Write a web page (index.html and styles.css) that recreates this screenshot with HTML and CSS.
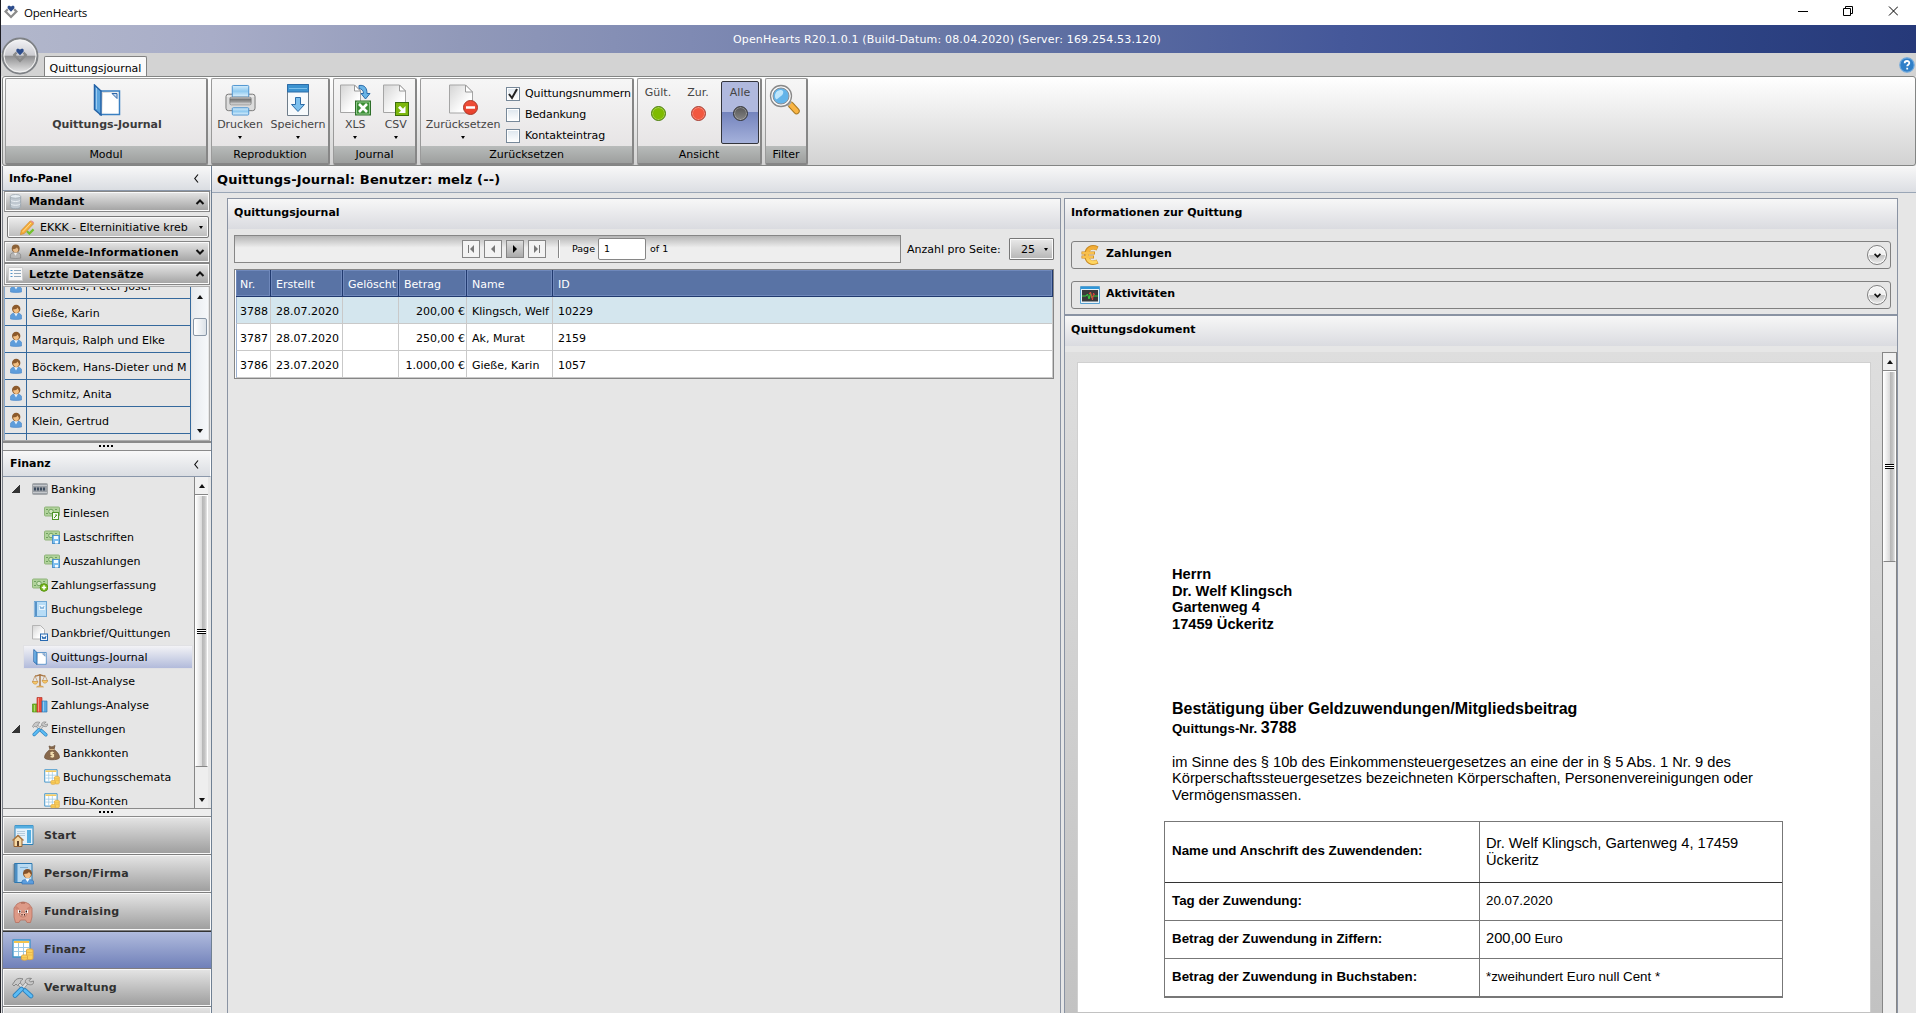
FILE: index.html
```html
<!DOCTYPE html>
<html lang="de">
<head>
<meta charset="utf-8">
<title>OpenHearts</title>
<link rel="stylesheet" href="styles.css">
</head>
<body>
<svg class="defs" width="0" height="0">
  <defs>
    <linearGradient id="gBlue" x1="0" y1="0" x2="0" y2="1"><stop offset="0" stop-color="#d6edfb"/><stop offset=".5" stop-color="#8fcaf0"/><stop offset="1" stop-color="#e2f3fd"/></linearGradient>
    <linearGradient id="gPage" x1="0" y1="0" x2="1" y2="1"><stop offset="0" stop-color="#d4d4d4"/><stop offset=".7" stop-color="#fff"/></linearGradient>
    <linearGradient id="gRed" x1="0" y1="0" x2="0" y2="1"><stop offset="0" stop-color="#f0503a"/><stop offset="1" stop-color="#e8402c"/></linearGradient>
    <linearGradient id="gGold" x1="0" y1="0" x2="0" y2="1"><stop offset="0" stop-color="#f2ac35"/><stop offset="1" stop-color="#ffd661"/></linearGradient>
    <linearGradient id="gRoll" x1="0" y1="0" x2="0" y2="1"><stop offset="0" stop-color="#ddd"/><stop offset=".3" stop-color="#777"/><stop offset=".6" stop-color="#999"/><stop offset="1" stop-color="#eee"/></linearGradient>
    <linearGradient id="gOrb" x1="0" y1="0" x2="0" y2="1"><stop offset="0" stop-color="#f5f5f8"/><stop offset=".48" stop-color="#cdcdd2"/><stop offset=".5" stop-color="#8e8e90"/><stop offset="1" stop-color="#ededed"/></linearGradient>
    <symbol id="logo" viewBox="0 0 14 14"><path fill="#8b8b8b" d="M3 3.500 0 6.500l7 7 7-7-3-3-1.600 1.600 1.500 1.500L7 10.400 3.100 6.500l1.500-1.500z"/><path fill="#2c4c8c" d="M7 6.800 3.600 3.300V1.500L5 .5l2 1 2-1 1.400 1v1.800z"/></symbol>
    <symbol id="journal" viewBox="0 0 28 32"><path fill="url(#gPage)" stroke="#3a80c2" stroke-width="1.500" d="M7 7h19.500v23.500H7z"/><path fill="#fff" d="M10 9h14.500v19.500H10z"/><path fill="#c9dcf0" stroke="#2e66a8" d="m19 9.500 5 5v-5z"/><path fill="#5ba4dd" stroke="#2462a6" stroke-width="1.500" d="m1.500 1 6.500 6v24l-6.500-5.500z"/><path stroke="#9dcbf0" d="M3.500 4v21"/></symbol>
    <symbol id="printer" viewBox="0 0 32 32"><rect x="1" y="10" width="30" height="17" rx="2.500" fill="#dcdcdc" stroke="#777"/><path stroke="#f6f6f6" d="M2 12h28"/><rect x="7.500" y="1" width="17" height="12" rx="1" fill="url(#gBlue)" stroke="#4b93cf"/><rect x="5" y="13" width="22" height="8" rx="1.500" fill="url(#gRoll)" stroke="#666" stroke-width=".6"/><rect x="7.500" y="24" width="17" height="7.500" rx="1" fill="url(#gBlue)" stroke="#4b93cf"/></symbol>
    <symbol id="save" viewBox="0 0 22 32"><path fill="#f7fafc" stroke="#6f7d8a" d="M.5.500h21v31H.5z"/><path fill="#3d93d0" stroke="#2c6ca8" d="M.5.500h21v7.500H.5z"/><path stroke="#7cc0ec" d="M2 4.500h18"/><path fill="#7cc0ee" stroke="#2d6da8" d="M8.500 13.500h5v7h4L11 27.500l-6.500-7h4z"/></symbol>
    <symbol id="xls" viewBox="0 0 31 32"><path fill="url(#gPage)" stroke="#a5a5a5" d="M.5 1h14l6 6v21.500H.5z"/><path fill="#fff" stroke="#999" d="M14.500 1v6h6z"/><path fill="#69b4e6" stroke="#2c6ba8" d="M19 1.500c6-1 8 3 8 8H30l-4.500 5.500L21 9.500h2.500c0-3-1.500-4.500-4.500-5z"/><rect x="15.500" y="17" width="15" height="14" fill="#3b8e35" stroke="#2e6e2a"/><path fill="none" stroke="#8fc78b" d="M16.500 18h13v12h-13z"/><path stroke="#fff" stroke-width="2.600" d="m19 20 8 8m0-8-8 8"/></symbol>
    <symbol id="csv" viewBox="0 0 26 32"><path fill="url(#gPage)" stroke="#a5a5a5" d="M.5 1h16l6 6v21.500H.5z"/><path fill="#fff" stroke="#999" d="M16.500 1v6h6z"/><rect x="12.500" y="18.500" width="13" height="13" fill="#7db70e" stroke="#3c6e0c"/><path fill="#fff" d="M22.500 22v7h-7l2.500-2.300-3-3 2-2 3 3z"/></symbol>
    <symbol id="reset" viewBox="0 0 29 32"><path fill="url(#gPage)" stroke="#a5a5a5" d="M.5 1h16l7 7v21H.5z"/><path fill="#fff" stroke="#999" d="M16.500 1v7h7z"/><circle cx="21.500" cy="23.500" r="7" fill="url(#gRed)" stroke="#a83828"/><path stroke="#fff" stroke-width="2.500" d="M17 23.500h9"/></symbol>
    <symbol id="lens" viewBox="0 0 32 32"><path stroke="#a87922" stroke-width="6.500" stroke-linecap="round" d="m22 21 5.500 6"/><path stroke="#f9b443" stroke-width="4.500" stroke-linecap="round" d="m22 21 5.500 6"/><path stroke="#aaa" stroke-width="5" d="m18 17.500 3 3"/><circle cx="12" cy="12" r="10.500" fill="#f8f8f8" stroke="#888" stroke-width="1.300"/><circle cx="12" cy="12" r="8" fill="#63b4e9" stroke="#8a8f95"/><path fill="#bfe6fb" d="M6 12c0-4 3-6 6-6s3 4 0 6-4 4-5 3-1-2-1-3z"/></symbol>
    <symbol id="db" viewBox="0 0 12 16"><path fill="#bfc8d0" stroke="#9aa5ae" d="M.5 2.500v11c0 3 11 3 11 0v-11"/><ellipse cx="6" cy="2.500" rx="5.500" ry="2" fill="#e7eef3" stroke="#a5b0b8"/><path fill="none" stroke="#eef3f6" d="M1 6.500c1 2 9 2 10 0M1 10.500c1 2 9 2 10 0"/></symbol>
    <symbol id="pencil" viewBox="0 0 16 16"><path fill="#f6ad3a" stroke="#d08a28" stroke-width=".8" d="M11.500 1 15 4 5 14.500l-4 1L2 11z"/><path fill="#e48d8b" d="m11.500 1 1.500-.6 2.500 2-.5 1.600z"/><path stroke="#ffe3a0" d="m3.500 12.500 9-9.500"/><path fill="none" stroke="#72c02c" stroke-width="2.300" d="m8 12 2.500 2.500 4.500-4.500"/></symbol>
    <symbol id="user" viewBox="0 0 12 16"><path fill="#5e9ddb" stroke="#4a87c8" stroke-width=".6" d="M.5 15v-3.500C1.500 9.500 3 9 6 9s4.500.5 5.500 2.500V15q-5.500 1-11 0z"/><path fill="#e8f2fb" d="m4 9 2 3.500L8 9z"/><circle cx="6.200" cy="5" r="4.200" fill="#8c5a2c"/><path fill="#f3bf82" d="M3 5.500c3 0 4-1 4.500-2L9 6c-.5 4-5 4-6-.5z"/></symbol>
    <symbol id="userg" viewBox="0 0 12 16"><path fill="#b5b5b5" stroke="#777" stroke-width=".6" d="M.5 15v-3.500C1.500 9.500 3 9 6 9s4.500.5 5.500 2.500V15q-5.500 1-11 0z"/><path fill="#eee" d="m4 9 2 3.500L8 9z"/><circle cx="6.200" cy="4.800" r="4.200" fill="#8c6238"/><path fill="#e8bb88" d="M3 5.500c3 0 4-1 4.500-2L9 6c-.5 4-5 4-6-.5z"/></symbol>
    <symbol id="list" viewBox="0 0 15 14"><path fill="#f8f8f8" stroke="#ccc" d="M.5.500h14v13H.5z"/><path stroke="#8fa8bc" d="M6 3.500h7M6 6.500h7M6 9.500h7"/><path stroke="#4f94cc" d="M2.500 3.500h2M2.500 6.500h2M2.500 9.500h2"/></symbol>
    <symbol id="bank" viewBox="0 0 16 12"><rect x=".5" y=".5" width="15" height="11" rx="1" fill="#9a9fa5" stroke="#a5a8ab"/><path stroke="#c5c8cc" d="M1 2.500h14M1 9.500h14"/><path stroke="#3c4b5e" stroke-width="3" stroke-dasharray="2 1" d="M2 6h12"/></symbol>
    <symbol id="money" viewBox="0 0 16 14"><rect x=".5" y="1" width="15" height="9" rx="1" fill="#b1d39b" stroke="#8fb47a"/><circle cx="7" cy="5.500" r="2.300" fill="#cfe6bd" stroke="#6fa05f"/><path stroke="#6fa05f" d="M2 3.500h2m-2 4h2m7-4h2"/></symbol>
    <symbol id="mexcel" viewBox="0 0 16 14"><use href="#money"/><rect x="8.500" y="6.500" width="6" height="7" fill="#f4faef" stroke="#4e9427"/><path fill="none" stroke="#4e9427" d="m10 12 3-3h-2"/></symbol>
    <symbol id="mdisk" viewBox="0 0 16 14"><use href="#money"/><rect x="8.500" y="5.500" width="7" height="8" fill="#7fc0ef" stroke="#4d92ca"/><path fill="#f4faff" d="M10 6h4v3h-4zm1 5h3v2.500h-3z"/></symbol>
    <symbol id="mplus" viewBox="0 0 16 14"><use href="#money"/><circle cx="12" cy="9.500" r="3.800" fill="#78b71c" stroke="#589512"/><path stroke="#fff" stroke-width="1.500" d="M9.800 9.500h4.400M12 7.300v4.400"/></symbol>
    <symbol id="book" viewBox="0 0 16 16"><rect x="2.500" y=".5" width="12" height="15" fill="#b7dcf6" stroke="#6ea6d3"/><path fill="#5793c8" d="M2 1h3v14H2z"/><path stroke="#c8dcec" stroke-dasharray="1 1" stroke-width="2" d="M2 1.500v13"/><path fill="#e8f4fd" d="M7 4h6v5H7z"/><path fill="none" stroke="#81b2db" d="m8 5 1 3 1-2 1 2 1-3"/></symbol>
    <symbol id="docw" viewBox="0 0 16 16"><path fill="url(#gPage)" stroke="#b5b5b5" d="M.5.500h8l4 4V14H.5z"/><rect x="8.500" y="9" width="7" height="6.500" fill="#eef4fb" stroke="#2668b0"/><path fill="none" stroke="#2668b0" d="m10 11 1 3 1-2 1 2 1-3"/></symbol>
    <symbol id="scale" viewBox="0 0 16 16"><path fill="none" stroke="#a97847" stroke-width="1.500" d="M8 1v13M3 3c3 0 3-1 5-1s2 1 5 1"/><path fill="none" stroke="#b98b56" stroke-width=".7" d="M3 3 .5 9h5.200zM13 2.500 10.300 8h5.200z"/><path fill="#f6c869" stroke="#c78e3d" stroke-width=".6" d="M.3 8.500h5.700c-.5 3.500-5 3.500-5.700 0zM10 7.500h5.700c-.5 3.500-5 3.500-5.700 0zM4.500 14c1-1.500 6-1.500 7 0z"/></symbol>
    <symbol id="chart" viewBox="0 0 16 16"><path fill="#78b822" stroke="#4d9316" stroke-width=".7" d="M.5 7h5v8h-5z"/><path fill="#ed4b38" stroke="#b4362c" stroke-width=".7" d="M5 .5h5V15H5z"/><path fill="#56a8e2" stroke="#3279b5" stroke-width=".7" d="M10 4h5v11h-5z"/><path stroke="#fff" stroke-opacity=".4" d="M6.500 1v13.500M11.500 4.500v10M2.500 8v6.500"/></symbol>
    <symbol id="tools" viewBox="0 0 22 21"><path fill="none" stroke="#888" stroke-width="3.500" d="m6 5 7 8M16 4l-5 6"/><path fill="none" stroke="#ddd" stroke-width="2" d="m6 5 7 8M16 4l-5 6"/><path fill="#c8c8c8" stroke="#777" stroke-width=".8" d="m.5 7 3-4.500C5.500.5 9 .5 11 1.500 9 2.500 8.500 4 8.500 5L5.500 8 4 6.500 2 8.500zM13.500 5c-1-3 2-5 6-4l-2.500 2 1.500 1.500 3-1c1 3-2 4.500-5 3.500z"/><path stroke="#2c81bd" stroke-width="4.600" stroke-linecap="round" d="M9.500 11.500 3 18m10-5 6 5.500"/><path stroke="#5cbcf5" stroke-width="3" stroke-linecap="round" d="M9.500 11.500 3 18m10-5 6 5.500"/></symbol>
    <symbol id="bag" viewBox="0 0 16 16"><path fill="#87684b" stroke="#664a32" stroke-width=".7" d="M5 1q3 2 6-.5L10 4.500c3 2 5.500 5 5.500 8 0 3-15 3-15 0 0-3 2.500-6 5.500-8z"/><path stroke="#d5b487" d="M5.500 4.500h5"/><path fill="none" stroke="#f1deb0" stroke-width="1.200" d="M9.800 7.500H7v2h2.500v2.200H6.500M8.200 6.500v6.300"/></symbol>
    <symbol id="coins" viewBox="0 0 22 22"><path fill="#fff" stroke="#3d93c9" stroke-width="1.300" d="M1 1h17v17H1z"/><path fill="#f5c54e" d="M2 2h15v2H2z"/><path stroke="#9bc8e4" d="M2 8.500h15M2 12.500h15M6.500 4v13M11.500 4v13"/><path fill="#fbd05c" stroke="#dfa843" d="M14.500 11c0-1.500 6.500-1.500 6.500 0v8.500c0 1.500-6.500 1.500-6.500 0z"/><path fill="#fbd05c" stroke="#dfa843" d="M9.500 17c0-1.500 6-1.500 6 0v3c0 1.500-6 1.500-6 0z"/><path stroke="#eab94c" d="M15 13.500h6M15 16h6M10 18.800h5"/></symbol>
    <symbol id="start" viewBox="0 0 22 22"><path fill="#e4f1fa" stroke="#2f80b5" d="M3 .5h18v19H3z"/><path fill="#54aee1" d="M3 .5h18v3H3zM15 5h4v13h-4z"/><path stroke="#b4cbdc" d="M5 6.500h8M5 8.500h8M5 10.500h8"/><path fill="#f5d9a4" stroke="#976130" d="M2 14v7.500h8V14L6 10.500z"/><path fill="none" stroke="#a97642" stroke-width="1.500" d="m.5 15.500 5.500-5 5.500 5"/><path fill="#60412a" d="M5 16h2v5H5z"/></symbol>
    <symbol id="person" viewBox="0 0 22 22"><path fill="#b8daf2" stroke="#2d78b0" d="M2.500.500H20v19H2.500z"/><path fill="#4a8fc6" d="M3 1h2.500v18H3z"/><path stroke="#6a7f90" stroke-width="2.500" stroke-dasharray="1 1" d="M2 1.500v17"/><path stroke="#7fb0d5" d="M8 4.500h8"/><path fill="#5b9ddd" stroke="#3874b4" stroke-width=".7" d="M10 21v-3c1-2 10-2 11.500 0v3z"/><path fill="#fff" d="m13.500 16 2 3 2-3z"/><circle cx="15.500" cy="10.500" r="4.500" fill="#84532a"/><path fill="#f4c086" d="M12 11c3 0 4-1 5-2l2 2.500c-.5 5-6 5-7-.5z"/></symbol>
    <symbol id="pig" viewBox="0 0 20 22"><path fill="#dd9a87" stroke="#b5705f" stroke-width=".8" d="M4 3q6-4 12 0l3 4v9l-1.500 5.500H14L12.500 19h-5L6 21.500H2.500L1 16V7z"/><path fill="#cf8674" d="m3 5 3.500 2.500L3 9 2 6.500zM17 5l-3.500 2.500L17 9l1-2.500z"/><ellipse cx="10" cy="13.500" rx="3.500" ry="2.500" fill="#edb3a2" stroke="#b5705f" stroke-width=".8"/><path fill="#fff" d="M5 9h3v3H5zm7 0h3v3h-3z"/><path fill="#3c1813" d="M6 9.500h1.500v2H6zm6.500 0H14v2h-1.500zM8.500 13h1v1.500h-1zm2.500 0h1v1.500h-1z"/><path stroke="#a15c4b" d="M8 2h4"/></symbol>
    <symbol id="euro" viewBox="0 0 18 20"><g fill="none" stroke-linecap="butt"><path stroke="#c98a22" stroke-width="4.500" d="M16.500 3.500c-6-3-11 0-11 6.500s5 9.500 11 6.500"/><path stroke="#c98a22" stroke-width="3" d="M.5 8H14M.5 12h12.500"/><path stroke="url(#gGold)" stroke-width="3.200" d="M16 3.500c-5.500-2.500-10 .5-10 6.500s4.500 9 10 6.500"/><path stroke="#f9c04c" stroke-width="1.800" d="M1.200 8h12M1.200 12h11"/></g></symbol>
    <symbol id="activity" viewBox="0 0 20 18"><path fill="#e8f2f8" stroke="#58a0d0" d="M.5.500h19v17H.5z"/><path fill="#2f96d8" d="M1 1h18v2H1z"/><path fill="#3a3a3a" d="M2 4h16v11.500H2z"/><path fill="none" stroke="#35d33c" d="M2 10h4l1.500-2 1.500 5 1.500-6 1 5 1.500-2h5"/><path fill="none" stroke="#e5443a" d="m9 8 1.500-2 2 8 1-7 1 2"/></symbol>
    <symbol id="chev" viewBox="0 0 10 6"><path fill="none" stroke="#111" stroke-width="2" d="m1.500 1 3.500 3.500L8.500 1"/></symbol>
  </defs>
</svg>

<div class="window">
  <header class="titlebar">
    <svg class="tlogo"><use href="#logo"/></svg><span class="tname">OpenHearts</span>
    <svg class="winbtns" viewBox="0 0 100 12" fill="none" stroke="#000"><path d="M0 6.500h10M45.500 3.500h7v7h-7zM47.500 3V1.500h7v7H53M91 1.500l9 9m0-9-9 9"/></svg>
  </header>
  <div class="bluebar">OpenHearts R20.1.0.1 (Build-Datum: 08.04.2020) (Server: 169.254.53.120)</div>
  <div class="tabstrip">
    <div class="tab">Quittungsjournal</div>
    <svg class="help" viewBox="0 0 16 16"><circle cx="8" cy="8" r="7.200" fill="#2f7fc8" stroke="#6fa8dc" stroke-width="1.200"/><path fill="none" stroke="#fff" stroke-width="1.800" d="M5.700 6.300c0-3 4.600-3 4.600-.3 0 1.700-2.100 1.700-2.100 3.300M8.200 10.700v1.800"/></svg>
    <svg class="orb" viewBox="0 0 38 38"><circle cx="19" cy="19" r="17.500" fill="url(#gOrb)" stroke="#7f8286" stroke-width="1.800"/><circle cx="19" cy="19" r="16" fill="none" stroke="#f4f4f4"/><use href="#logo" x="11.500" y="11" width="15" height="15"/></svg>
  </div>

  <div class="ribbon">
    <section class="group g-modul">
      <div class="gbody"><div class="rbtn strong"><svg width="28" height="32"><use href="#journal"/></svg><span>Quittungs-Journal</span></div></div>
      <div class="glabel">Modul</div>
    </section>
    <section class="group g-repro">
      <div class="gbody"><div class="rbtn w57"><svg width="31" height="32"><use href="#printer"/></svg><span>Drucken</span><i class="dd"></i></div><div class="rbtn w57"><svg width="22" height="32"><use href="#save"/></svg><span>Speichern</span><i class="dd"></i></div></div>
      <div class="glabel">Reproduktion</div>
    </section>
    <section class="group g-journal">
      <div class="gbody"><div class="rbtn w41"><svg width="31" height="32"><use href="#xls"/></svg><span>XLS</span><i class="dd"></i></div><div class="rbtn w41"><svg width="26" height="32"><use href="#csv"/></svg><span>CSV</span><i class="dd"></i></div></div>
      <div class="glabel">Journal</div>
    </section>
    <section class="group g-reset">
      <div class="gbody"><div class="rbtn w84"><svg width="29" height="32"><use href="#reset"/></svg><span>Zurücksetzen</span><i class="dd"></i></div>
        <div class="checks">
          <div class="check"><b class="box"><svg viewBox="0 0 12 12"><path fill="none" stroke="#222" stroke-width="2" d="m2 6 3 4 5-9"/></svg></b>Quittungsnummern</div>
          <div class="check"><b class="box"></b>Bedankung</div>
          <div class="check"><b class="box"></b>Kontakteintrag</div>
        </div></div>
      <div class="glabel">Zurücksetzen</div>
    </section>
    <section class="group g-view">
      <div class="gbody"><div class="view">Gült.<i class="dot green"></i></div><div class="view">Zur.<i class="dot red"></i></div><div class="view on">Alle<i class="dot gray"></i></div></div>
      <div class="glabel">Ansicht</div>
    </section>
    <section class="group g-filter">
      <div class="gbody"><div class="rbtn w41"><svg width="32" height="32"><use href="#lens"/></svg></div></div>
      <div class="glabel">Filter</div>
    </section>
  </div>

  <div class="body">
    <aside class="side">
      <div class="phead"><span>Info-Panel</span><svg class="lt" viewBox="0 0 5 9"><path d="M4 .5.800 4.500 4 8.500" fill="none" stroke="#111" stroke-width="1.200"/></svg></div>
      <div class="acc a1"><svg width="13" height="15"><use href="#db"/></svg><span>Mandant</span><svg class="chev up"><use href="#chev"/></svg></div>
      <div class="comborow"><div class="combo"><svg width="16" height="15"><use href="#pencil"/></svg><span>EKKK - Elterninitiative kreb</span><i class="dd"></i></div></div>
      <div class="acc a2"><svg width="12" height="15"><use href="#userg"/></svg><span>Anmelde-Informationen</span><svg class="chev"><use href="#chev"/></svg></div>
      <div class="acc a3"><svg width="15" height="14"><use href="#list"/></svg><span>Letzte Datensätze</span><svg class="chev up"><use href="#chev"/></svg></div>
      <div class="recent">
        <div class="rlist">
          <div class="rrow"><svg><use href="#user"/></svg><span>Grommes, Peter Josef</span></div>
          <div class="rrow"><svg><use href="#user"/></svg><span>Gieße, Karin</span></div>
          <div class="rrow"><svg><use href="#user"/></svg><span>Marquis, Ralph und Elke</span></div>
          <div class="rrow"><svg><use href="#user"/></svg><span>Böckem, Hans-Dieter und M</span></div>
          <div class="rrow"><svg><use href="#user"/></svg><span>Schmitz, Anita</span></div>
          <div class="rrow"><svg><use href="#user"/></svg><span>Klein, Gertrud</span></div>
          <div class="rrow"><i></i><span></span></div>
        </div>
        <div class="rscroll"><i class="tri up"></i><b class="rthumb"></b><i class="tri"></i></div>
      </div>
      <div class="split s1"><i></i></div>
      <div class="phead p2"><span>Finanz</span><svg class="lt" viewBox="0 0 5 9"><path d="M4 .5.800 4.500 4 8.500" fill="none" stroke="#111" stroke-width="1.200"/></svg></div>
      <div class="treebox">
        <div class="tree">
          <div class="node n0"><i class="exp"></i><svg><use href="#bank"/></svg><span>Banking</span></div>
          <div class="node n2"><svg><use href="#mexcel"/></svg><span>Einlesen</span></div>
          <div class="node n2"><svg><use href="#mdisk"/></svg><span>Lastschriften</span></div>
          <div class="node n2"><svg><use href="#mdisk"/></svg><span>Auszahlungen</span></div>
          <div class="node n1"><svg><use href="#mplus"/></svg><span>Zahlungserfassung</span></div>
          <div class="node n1"><svg><use href="#book"/></svg><span>Buchungsbelege</span></div>
          <div class="node n1"><svg><use href="#docw"/></svg><span>Dankbrief/Quittungen</span></div>
          <div class="node n1 sel"><svg><use href="#journal"/></svg><span>Quittungs-Journal</span></div>
          <div class="node n1"><svg><use href="#scale"/></svg><span>Soll-Ist-Analyse</span></div>
          <div class="node n1"><svg><use href="#chart"/></svg><span>Zahlungs-Analyse</span></div>
          <div class="node n0"><i class="exp"></i><svg><use href="#tools"/></svg><span>Einstellungen</span></div>
          <div class="node n2"><svg><use href="#bag"/></svg><span>Bankkonten</span></div>
          <div class="node n2"><svg><use href="#coins"/></svg><span>Buchungsschemata</span></div>
          <div class="node n2"><svg><use href="#coins"/></svg><span>Fibu-Konten</span></div>
        </div>
        <div class="scroll tscroll"><div class="sbtn"><i class="tri up"></i></div><div class="thumb"><i class="grip"></i></div><div class="sbtn end"><i class="tri"></i></div></div>
      </div>
      <div class="split s2"><i></i></div>
      <nav class="nav">
        <div class="nitem"><svg><use href="#start"/></svg>Start</div>
        <div class="nitem"><svg><use href="#person"/></svg>Person/Firma</div>
        <div class="nitem"><svg><use href="#pig"/></svg>Fundraising</div>
        <div class="nitem on"><svg><use href="#coins"/></svg>Finanz</div>
        <div class="nitem"><svg><use href="#tools"/></svg>Verwaltung</div>
        <div class="nitem"></div>
      </nav>
    </aside>

    <main class="main">
      <h1 class="mtitle">Quittungs-Journal: Benutzer: melz (--)</h1>
      <div class="panels">
        <section class="panel left">
          <h2 class="ph">Quittungsjournal</h2>
          <div class="toolbar">
            <div class="pager">
              <span class="pb"><svg viewBox="0 0 8 8"><path fill="#777" d="M1 0h1v8H1zM7 0v8L3 4z"/></svg></span>
              <span class="pb"><svg viewBox="0 0 8 8"><path fill="#777" d="M6 0v8L2 4z"/></svg></span>
              <span class="pb dark"><svg viewBox="0 0 8 8"><path fill="#000" d="M2 0v8l4-4z"/></svg></span>
              <span class="pb"><svg viewBox="0 0 8 8"><path fill="#777" d="M6 0h1v8H6zM1 0v8l4-4z"/></svg></span>
              <i class="sep"></i><span class="pg">Page</span><span class="pin">1</span><span class="of">of 1</span>
            </div>
            <span class="aps">Anzahl pro Seite:</span>
            <div class="size">25<i class="dd"></i></div>
          </div>
          <div class="grid">
            <div class="tr th"><span>Nr.</span><span>Erstellt</span><span>Gelöscht</span><span>Betrag</span><span>Name</span><span>ID</span></div>
            <div class="tr hit"><span>3788</span><span>28.07.2020</span><span></span><span class="num">200,00 €</span><span>Klingsch, Welf</span><span>10229</span></div>
            <div class="tr"><span>3787</span><span>28.07.2020</span><span></span><span class="num">250,00 €</span><span>Ak, Murat</span><span>2159</span></div>
            <div class="tr"><span>3786</span><span>23.07.2020</span><span></span><span class="num">1.000,00 €</span><span>Gieße, Karin</span><span>1057</span></div>
          </div>
        </section>
        <section class="panel right">
          <h2 class="ph">Informationen zur Quittung</h2>
          <div class="exps">
            <div class="ebox"><svg class="ei" width="18" height="20"><use href="#euro"/></svg><span>Zahlungen</span><b class="round"><svg><use href="#chev"/></svg></b></div>
            <div class="ebox"><svg class="ei" width="20" height="18"><use href="#activity"/></svg><span>Aktivitäten</span><b class="round"><svg><use href="#chev"/></svg></b></div>
          </div>
          <h2 class="ph second">Quittungsdokument</h2>
          <div class="docarea">
            <article class="page">
              <p class="addr">Herrn<br>Dr. Welf Klingsch<br>Gartenweg 4<br>17459 Ückeritz</p>
              <h3>Bestätigung über Geldzuwendungen/Mitgliedsbeitrag</h3>
              <p class="qnr">Quittungs-Nr. <b>3788</b></p>
              <p class="para">im Sinne des § 10b des Einkommensteuergesetzes an eine der in § 5 Abs. 1 Nr. 9 des<br>Körperschaftssteuergesetzes bezeichneten Körperschaften, Personenvereinigungen oder<br>Vermögensmassen.</p>
              <div class="dt">
                <div class="drow tall"><b>Name und Anschrift des Zuwendenden:</b><span class="big">Dr. Welf Klingsch, Gartenweg 4, 17459<br>Ückeritz</span></div>
                <div class="drow"><b>Tag der Zuwendung:</b><span>20.07.2020</span></div>
                <div class="drow"><b>Betrag der Zuwendung in Ziffern:</b><span><em>200,00</em> Euro</span></div>
                <div class="drow"><b>Betrag der Zuwendung in Buchstaben:</b><span>*zweihundert Euro null Cent *</span></div>
              </div>
            </article>
            <div class="scroll dscroll"><div class="sbtn"><i class="tri up"></i></div><div class="thumb"><i class="grip"></i></div></div>
          </div>
        </section>
      </div>
    </main>
  </div>
</div>
</body>
</html>
```
FILE: styles.css
```css
* { box-sizing: border-box; }
body { margin: 0; font: 11px/14px "DejaVu Sans", Verdana, sans-serif; color: #000; background: #e6e6e6; }
h1, h2, h3, p { margin: 0; font-weight: normal; }
svg { display: block; flex: none; }
.defs { position: absolute; }
.window { width: 1916px; height: 1013px; overflow: hidden; display: flex; flex-direction: column; border-left: 1px solid #1c1c22; background: #e6e6e6; }

.titlebar { height: 25px; flex: none; background: #fff; display: flex; align-items: center; font: 11.500px/16px "Open Sans", "Segoe UI", sans-serif; letter-spacing: -.2px; padding: 0 18px 0 3px; }
.tlogo { width: 14px; height: 14px; margin-top: -2px; }
.tname { margin-left: 6px; margin-top: 1px; flex: 1; }
.winbtns { width: 100px; height: 12px; margin: -4px 0 0; }
.bluebar { height: 28px; flex: none; padding: 8px 23px 0 0; text-align: center; color: #fff; letter-spacing: .17px; background: linear-gradient(90deg, #b2b7cb 0, #a8adc8 11%, #9199b9 24%, #7f8ab3 36%, #6474a4 52%, #45589a 70%, #2f4586 88%, #263979 100%); }
.tabstrip { height: 23px; flex: none; background: #d3d3d3; position: relative; display: flex; align-items: flex-end; }
.tab { margin-left: 43px; width: 103px; height: 20px; border: 1px solid #828282; border-bottom: 0; border-radius: 2px 2px 0 0; background: #fafafa; text-align: center; padding-top: 5px; }
.orb { position: absolute; left: 0; top: -16px; width: 38px; height: 38px; }
.help { width: 16px; height: 16px; margin: 0 1px 3px auto; }

.ribbon { height: 90px; flex: none; margin-left: 1px; border: 1px solid #838584; border-radius: 3px; background: linear-gradient(#fff, #d2d2d2); display: flex; gap: 3px; padding: 1px 2px; }
.group { height: 87px; border: 1px solid #9a9a9a; border-right: 2px solid #868686; border-bottom: 2px solid #868686; border-radius: 2px; display: flex; flex-direction: column; background: linear-gradient(#f6f6f6, #e3e0e1); }
.g-modul { width: 203px; } .g-repro { width: 119px; } .g-journal { width: 84px; } .g-reset { width: 214px; } .g-view { width: 125px; } .g-filter { width: 43px; }
.gbody { flex: 1; display: flex; justify-content: center; min-height: 0; }
.glabel { height: 17px; text-align: center; background: linear-gradient(#b8bbba, #9d9f9e); line-height: 18px; }
.rbtn { display: flex; flex-direction: column; align-items: center; padding-top: 5px; color: #444; }
.rbtn span { margin-top: 2px; white-space: nowrap; }
.strong { font-weight: bold; color: #3b3b3b; letter-spacing: -.03px; padding-left: 2px; }
.w57 { width: 58px; } .w41 { width: 41px; } .w84 { width: 84px; flex: none; }
.g-repro .rbtn { margin-left: -1px; margin-right: 1px; }
.g-journal .rbtn { margin-left: 1px; margin-right: -1px; }
.g-filter .rbtn { margin-left: -2px; }
.dd { display: block; border: 2.500px solid transparent; border-top: 3px solid #000; border-bottom: 0; }
.rbtn .dd { margin-top: 4px; }
.checks { flex: 1; padding: 8px 0 0 1px; display: flex; flex-direction: column; gap: 7px; }
.check { height: 14px; display: flex; align-items: center; gap: 5px; white-space: nowrap; letter-spacing: -.1px; }
.box { width: 14px; height: 14px; margin-top: -1px; border: 1px solid #778899; background: linear-gradient(#dde6ee, #fff); box-shadow: inset 0 0 0 1px #fff; }
.view { width: 40px; height: 63px; margin-top: 2px; padding-top: 4px; border: 1px solid transparent; display: flex; flex-direction: column; align-items: center; color: #444; gap: 6px; }
.view.on { width: 38px; margin-left: 3px; border-color: #33353d; border-radius: 2px; background: linear-gradient(#b0b9de 0 49%, #7484bd 50%, #a5b1db); }
.g-view .gbody { justify-content: flex-start; }
.dot { width: 15px; height: 15px; border-radius: 50%; border: 1px solid #555; box-shadow: inset 0 0 0 1px rgba(255,255,255,.3); }
.green { background: #7fbb00; border-color: #4d7e10; } .red { background: #f2573f; border-color: #a64035; } .gray { background: linear-gradient(#555, #858585); border-color: #333; }

.body { flex: 1; min-height: 0; display: flex; }
.side { width: 210px; flex: none; margin-left: 1px; border-left: 1px solid #7c8088; border-right: 1px solid #6f8093; display: flex; flex-direction: column; overflow: hidden; }
.phead { height: 25px; flex: none; border-bottom: 1px solid #8a97aa; border-right: 1px solid #fff; background: linear-gradient(#f8f8f8, #dadde2); display: flex; align-items: center; justify-content: space-between; font-weight: bold; padding: 1px 11px 0 6px; }
.lt { width: 5px; height: 9px; }
.acc { flex: none; margin: 0 1px; border: 1px solid #868686; border-left-color: #9a9a9a; box-shadow: inset 0 0 0 1px #fafafa; background: linear-gradient(#e6e6e6, #a2a2a2); display: flex; align-items: center; font-weight: bold; letter-spacing: .12px; padding: 1px 4px 0 3px; }
.acc span { flex: 1; margin-left: 6px; }
.acc > svg:first-child { width: 15px; margin-top: -2px; }
.chev { width: 10px; height: 6px; margin-top: -1px; }
.up { transform: rotate(180deg); }
.a1 { height: 21px; } .a2 { height: 22px; } .a3 { height: 22px; }
.comborow { height: 29px; flex: none; padding: 4px 2px 3px 4px; }
.combo { height: 22px; border: 1px solid #777; border-radius: 2px; box-shadow: inset 0 0 0 1px #fafafa; background: linear-gradient(#eee, #bcbcbc); display: flex; align-items: center; padding: 1px 5px 0 11px; }
.combo span { width: 148px; height: 14px; margin-left: 5px; overflow: hidden; white-space: nowrap; }
.combo .dd { margin-left: auto; }
.recent { height: 155px; flex: none; margin: 1px 1px 0 0; border: 1px solid #adadad; display: flex; overflow: hidden; }
.rlist { width: 187px; border-right: 1px solid #35699d; border-left: 1px solid #88a8cc; }
.rrow { height: 27px; border-bottom: 1px solid #35699d; display: flex; align-items: center; letter-spacing: .03px; }
.rrow:first-child { margin-top: -15px; }
.rrow svg { width: 12px; height: 16px; margin-left: 5px; margin-right: 4px; }
.rrow i { width: 21px; }
.rrow span { height: 27px; border-left: 1px solid #35699d; padding: 8px 0 0 5px; white-space: nowrap; flex: 1; overflow: hidden; }
.rscroll { flex: 1; margin: 0 1px 1px; background: linear-gradient(90deg, #e8ebef, #f6f8fa); display: flex; flex-direction: column; align-items: center; padding: 8px 0 6px; }
.tri { display: block; border: 3px solid transparent; border-top: 4px solid #111; border-bottom: 0; }
.rthumb { width: 14px; height: 18px; margin: 19px 0 auto; border: 1px solid #8896a6; border-radius: 2px; background: linear-gradient(90deg, #fff, #dce2e8); }
.split { flex: none; background: #ededed; border: solid #8a8a8a; border-width: 1px 0; display: flex; justify-content: center; padding-right: 2px; }
.split i { width: 15px; height: 2px; margin-top: 2px; background: repeating-linear-gradient(90deg, #000 0 2px, transparent 2px 4px); }
.s1 { height: 10px; border-top-width: 2px; }
.s2 { height: 9px; }
.p2 { height: 26px; padding-left: 7px; }
.treebox { height: 331px; flex: none; display: flex; overflow: hidden; }
.tree { width: 191px; }
.node { height: 24px; display: flex; align-items: center; }
.node svg { width: 16px; height: 16px; }
.node span { margin-left: 3px; padding-top: 1px; }
.n1 { padding-left: 29px; } .n2 { padding-left: 41px; } .n0 { padding-left: 9px; }
.exp { width: 8px; height: 8px; margin-right: 12px; background: linear-gradient(135deg, transparent 50%, #333 50%); }
.sel { margin: 0 1px 0 20px; padding-left: 8px; border: 1px solid #e1e1e4; background: linear-gradient(#f3f3f6, #b2bbdb); }
.scroll { border-left: 1px solid #868686; background: #eee; display: flex; flex-direction: column; }
.tscroll { width: 14px; }
.sbtn { height: 18px; flex: none; border-bottom: 1px solid #868686; display: flex; align-items: center; justify-content: center; background: #f1f1f1; }
.thumb { height: 272px; flex: none; border: 1px solid #fff; border-bottom: 1px solid #868686; background: linear-gradient(90deg, #fcfcfc 0, #dcdcdc 50%, #b4b4b4 52%, #c4c4c4 80%, #e8e8e8); display: flex; align-items: center; justify-content: center; }
.grip { width: 9px; height: 5px; background: repeating-linear-gradient(#000 0 1px, #fff 1px 2px); }
.sbtn.end { border: 0; height: 20px; margin-top: 23px; background: none; }
.nitem { height: 38px; border-bottom: 1px solid #7e7e7e; box-shadow: inset 0 0 0 1px #f8f8f8; background: linear-gradient(#e5e5e5, #9d9d9d); display: flex; align-items: center; gap: 10px; padding-left: 9px; font-weight: bold; letter-spacing: .2px; color: #303030; }
.nitem svg { width: 22px; height: 22px; }
.nitem.on { background: linear-gradient(#b0bbdd, #7080b9); box-shadow: none; border-top: 1px solid #333; border-bottom-color: #807c80; }

.main { flex: 1; min-width: 0; display: flex; flex-direction: column; }
.mtitle { height: 27px; flex: none; border-bottom: 1px solid #9aa6b6; background: linear-gradient(#f8f8f8, #dcdee3); font: bold 13px/27px "DejaVu Sans", Verdana, sans-serif; letter-spacing: .16px; padding-left: 5px; }
.panels { flex: 1; display: flex; gap: 3px; padding: 5px 0 0 15px; min-height: 0; }
.panel { border: 1px solid #8a93a3; border-bottom: 0; display: flex; flex-direction: column; }
.left { width: 834px; } .right { width: 834px; }
.ph { height: 30px; flex: none; font-size: 11px; font-weight: bold; letter-spacing: .03px; background: linear-gradient(#f7f7f7, #dadbe0); padding: 7px 0 0 6px; }
.toolbar { display: flex; align-items: center; height: 28px; margin: 6px 6px 0; }
.pager { width: 667px; height: 28px; border: 1px solid #868686; background: linear-gradient(#b5b5b5, #eee 45%); display: flex; align-items: center; padding-left: 227px; font-size: 9.500px; }
.pb { width: 18px; height: 18px; margin-right: 4px; border: 1px solid #868686; background: #f3f3f3; display: grid; place-items: center; }
.pb svg { width: 8px; height: 8px; }
.dark { background: linear-gradient(#ddd, #aaa); }
.sep { width: 2px; height: 18px; margin-left: 8px; border-left: 1px solid #868686; border-right: 1px solid #fff; }
.pg { margin-left: 12px; width: 26px; }
.pin { width: 48px; height: 22px; border: 1px solid #868686; border-radius: 2px; background: #fff; padding: 3px 5px; }
.of { margin-left: 4px; }
.aps { margin-left: 6px; width: 102px; white-space: nowrap; padding-top: 1px; }
.size { width: 45px; height: 22px; border: 1px solid #777; border-radius: 1px; box-shadow: inset 0 0 0 1px #fafafa; background: linear-gradient(#eaeaea, #b5b5b5); display: flex; align-items: center; justify-content: space-between; padding: 1px 5px 0 11px; }
.grid { margin: 6px 6px 0; border: 1px solid #868686; background: #fff; padding-left: 1px; }
.tr { display: grid; grid-template-columns: 35px 72px 56px 68px 86px 1fr; height: 27px; }
.tr span { border-right: 1px solid #c9c9c9; border-bottom: 1px solid #c9c9c9; padding: 8px 2px 0 5px; white-space: nowrap; }
.tr span:first-child { border-left: 1px solid #9bb0d0; padding-left: 3px; padding-right: 0; }
.tr .num { text-align: right; padding: 8px 1px 0 0; }
.th { color: #fff; }
.tr.th span { background: #5973a5; border-color: #213a6f; box-shadow: inset 0 0 0 1px #6f88bb; border-left: 0; }
.tr.th span:first-child { padding-left: 4px; }
.hit { background: #d4e6ee; }

.exps { height: 85px; padding: 12px 6px 0; display: flex; flex-direction: column; gap: 12px; }
.ebox { height: 28px; border: 1px solid #808080; border-radius: 3px; display: flex; align-items: center; font-weight: bold; padding: 0 3px 0 8px; }
.ei { width: 20px; }
.ebox span { flex: 1; margin: -3px 0 0 6px; }
.round { width: 20px; height: 20px; border-radius: 50%; border: 1px solid #7e7e7e; box-shadow: inset 0 0 0 1px #fff; background: linear-gradient(#f2f2f2 50%, #c0c0c0 50%, #eee); display: grid; place-items: center; }
.round svg { width: 9px; height: 5px; }
.second { height: 32px; border-top: 2px solid #8a93a3; }
.docarea { flex: 1; margin-top: 6px; display: flex; min-height: 0; overflow: hidden; background: linear-gradient(#dedede, #c2c2c2); }
.page { width: 794px; flex: none; margin: 10px 11px 0 12px; border: 1px solid #d0d0d0; border-bottom: 0; background: #fff; height: 650px; padding: 203px 0 0 94px; font: 14.670px/16.670px "Liberation Sans", Arial, sans-serif; }
.addr { font-weight: bold; }
.page h3 { font: bold 16px/20px "Liberation Sans", Arial, sans-serif; margin-top: 66px; white-space: nowrap; }
.qnr { font-weight: bold; font-size: 13.330px; line-height: 18px; }
.qnr b { font-size: 16px; }
.para { margin-top: 16px; white-space: nowrap; }
.dt { margin: 17px 0 0 -8px; width: 619px; border: 1px solid #777; border-bottom-width: 2px; }
.drow { display: grid; grid-template-columns: 314px 1fr; height: 38px; border-bottom: 1px solid #777; font-size: 13.330px; }
.drow:last-child { height: 37px; border-bottom: 0; }
.tall { height: 61px; border-bottom-color: #333; }
.drow > * { padding-left: 7px; align-content: center; }
.drow > span { border-left: 1px solid #777; padding-left: 6px; }
.drow em, .drow .big { font-style: normal; font-size: 14.670px; }
.dscroll { width: 15px; border-top: 1px solid #868686; border-right: 1px solid #868686; }
.dscroll .thumb { height: 191px; }
```
